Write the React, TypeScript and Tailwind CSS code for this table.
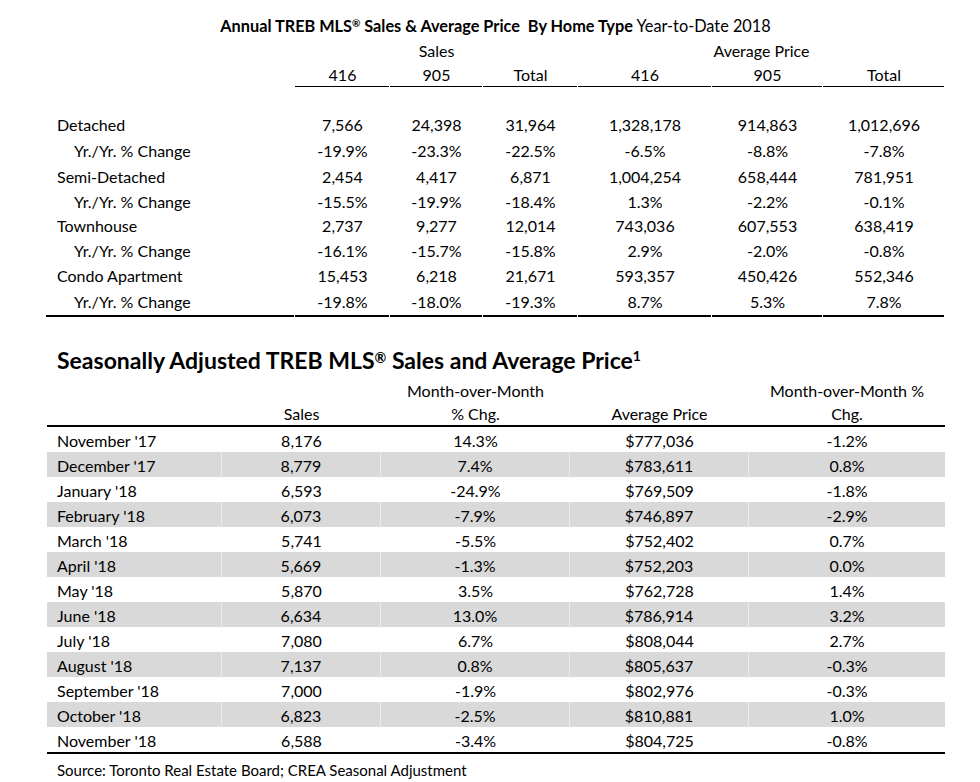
import React from "react";

const topRows: { label: string; sub?: boolean; v: string[] }[] = [
  { label: "Detached", v: ["7,566", "24,398", "31,964", "1,328,178", "914,863", "1,012,696"] },
  { label: "Yr./Yr. % Change", sub: true, v: ["-19.9%", "-23.3%", "-22.5%", "-6.5%", "-8.8%", "-7.8%"] },
  { label: "Semi-Detached", v: ["2,454", "4,417", "6,871", "1,004,254", "658,444", "781,951"] },
  { label: "Yr./Yr. % Change", sub: true, v: ["-15.5%", "-19.9%", "-18.4%", "1.3%", "-2.2%", "-0.1%"] },
  { label: "Townhouse", v: ["2,737", "9,277", "12,014", "743,036", "607,553", "638,419"] },
  { label: "Yr./Yr. % Change", sub: true, v: ["-16.1%", "-15.7%", "-15.8%", "2.9%", "-2.0%", "-0.8%"] },
  { label: "Condo Apartment", v: ["15,453", "6,218", "21,671", "593,357", "450,426", "552,346"] },
  { label: "Yr./Yr. % Change", sub: true, v: ["-19.8%", "-18.0%", "-19.3%", "8.7%", "5.3%", "7.8%"] },
];

const topHeights = ["h-[27px]", "h-[26px]", "h-[25px]", "h-[25px]", "h-[24px]", "h-[25px]", "h-[26px]", "h-[26px]"];

const monthRows: string[][] = [
  ["November '17", "8,176", "14.3%", "$777,036", "-1.2%"],
  ["December '17", "8,779", "7.4%", "$783,611", "0.8%"],
  ["January '18", "6,593", "-24.9%", "$769,509", "-1.8%"],
  ["February '18", "6,073", "-7.9%", "$746,897", "-2.9%"],
  ["March '18", "5,741", "-5.5%", "$752,402", "0.7%"],
  ["April '18", "5,669", "-1.3%", "$752,203", "0.0%"],
  ["May '18", "5,870", "3.5%", "$762,728", "1.4%"],
  ["June '18", "6,634", "13.0%", "$786,914", "3.2%"],
  ["July '18", "7,080", "6.7%", "$808,044", "2.7%"],
  ["August '18", "7,137", "0.8%", "$805,637", "-0.3%"],
  ["September '18", "7,000", "-1.9%", "$802,976", "-0.3%"],
  ["October '18", "6,823", "-2.5%", "$810,881", "1.0%"],
  ["November '18", "6,588", "-3.4%", "$804,725", "-0.8%"],
];

const topCols = "grid grid-cols-[249px_95px_93px_95px_134px_111px_122px]";
const botCols = "grid grid-cols-[175px_159px_189px_179px_196px]";

function Reg() {
  return <span className="text-[0.62em] align-[0.45em]">®</span>;
}

export default function App() {
  return (
    <div
      className="w-[980px] h-[782px] bg-white text-black overflow-hidden"
      style={{ fontFamily: "Lato, 'Open Sans', sans-serif" }}
    >
      {/* Top table */}
      <div className="ml-[46px] w-[899px] pt-[14px]">
        <div className="h-[24px] flex items-center justify-center text-[16.3px] whitespace-pre">
          <span className="font-bold">
            Annual TREB MLS<Reg /> Sales &amp; Average Price  By Home Type
          </span>
          <span> Year-to-Date 2018</span>
        </div>
        <div className={`${topCols} h-[25px] items-center text-[16px]`}>
          <div />
          <div className="col-span-3 text-center">Sales</div>
          <div className="col-span-3 text-center">Average Price</div>
        </div>
        <div className={`${topCols} h-[23px] items-center text-[16px]`}>
          <div />
          {["416", "905", "Total", "416", "905", "Total"].map((h, i) => (
            <div key={i} className="text-center">{h}</div>
          ))}
        </div>
        <div className={`${topCols}`}>
          <div />
          {[0, 1, 2, 3, 4, 5].map((i) => (
            <div key={i} className="h-px bg-black mr-px" />
          ))}
        </div>
        <div className="h-[24px]" />
        <div className="flex flex-col text-[16px]">
          {topRows.map((r, ri) => (
            <div key={ri} className={`${topCols} ${topHeights[ri]} items-center`}>
              <div className={r.sub ? "pl-[28px]" : "pl-[11px]"}>{r.label}</div>
              {r.v.map((v, i) => (
                <div key={i} className="text-center">{v}</div>
              ))}
            </div>
          ))}
        </div>
        <div className={`${topCols}`}>
          <div className="h-[2px] bg-black mr-px" />
          {[0, 1, 2, 3, 4, 5].map((i) => (
            <div key={i} className="h-[2px] bg-black mr-px" />
          ))}
        </div>
      </div>

      {/* Bottom table */}
      <div className="ml-[47px] w-[898px] mt-[28px]">
        <div className="h-[30px] flex items-center pl-[10px] text-[23px] font-bold whitespace-pre">
          <span>
            Seasonally Adjusted TREB MLS<Reg /> Sales and Average Price
            <span className="text-[14px] align-[0.6em]">1</span>
          </span>
        </div>
        <div className={`${botCols} text-[16px] pt-[4px]`}>
          <div />
          <div className="flex flex-col items-center justify-end leading-[23px]">
            <span>Sales</span>
          </div>
          <div className="flex flex-col items-center leading-[23px]">
            <span>Month-over-Month</span>
            <span>% Chg.</span>
          </div>
          <div className="flex flex-col items-center justify-end leading-[23px]">
            <span>Average Price</span>
          </div>
          <div className="flex flex-col items-center leading-[23px]">
            <span>Month-over-Month %</span>
            <span>Chg.</span>
          </div>
        </div>
        <div className="h-[2px] bg-black" />
        <div className="flex flex-col text-[16px]">
          {monthRows.map((r, ri) => {
            const gray = ri % 2 === 1;
            return (
              <div
                key={ri}
                className={`${botCols} h-[25px] items-stretch ${gray ? "bg-[#d9d9d9]" : ""}`}
              >
                {r.map((c, ci) => (
                  <div
                    key={ci}
                    className={`flex items-center pt-[2px] ${ci === 0 ? "pl-[10px]" : "justify-center"} ${
                      gray && ci < 4 ? "border-r border-[#ececec]" : ""
                    }`}
                  >
                    {c}
                  </div>
                ))}
              </div>
            );
          })}
        </div>
        <div className="h-[2px] bg-black" />
        <div className="h-[31px] flex items-center pl-[10px] pt-[2px] text-[15px]">
          Source: Toronto Real Estate Board; CREA Seasonal Adjustment
        </div>
      </div>
    </div>
  );
}
